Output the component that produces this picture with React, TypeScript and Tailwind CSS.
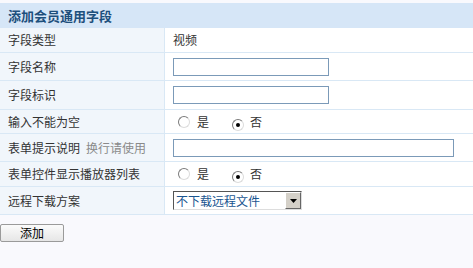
import React from "react";

const font = { fontFamily: '"Noto Sans CJK SC", "Noto Sans", sans-serif' };

function Radio({ checked }: { checked?: boolean }) {
  return (
    <span className="relative inline-flex h-[12px] w-[12px] items-center justify-center rounded-full border border-[#7a7a7a] border-r-[#dcdcdc] border-b-[#dcdcdc] bg-white">
      {checked && <span className="h-[4px] w-[4px] rounded-full bg-black" />}
    </span>
  );
}

function Row({ label, children, h, extra }: { label: string; children?: React.ReactNode; h: string; extra?: string }) {
  return (
    <div className={`flex border-b border-[#d9e8f5] ${h}`}>
      <div className="flex w-[165px] shrink-0 items-center border-r border-[#d9e8f5] bg-[#f1f6fb] pl-[8px] text-[12px] text-[#333]">
        {label}
        {extra && <span className="ml-[6px] text-[#8a8a8a]">{extra}</span>}
      </div>
      <div className="flex flex-1 items-center bg-white pl-[8px] text-[12px] text-[#333]">{children}</div>
    </div>
  );
}

function Input({ w }: { w: string }) {
  return <div className={`h-[18px] ${w} border border-[#7b9ab8] bg-white`} />;
}

function Radios() {
  return (
    <div className="ml-[5px] flex items-center">
      <Radio />
      <span className="ml-[7px]">是</span>
      <span className="ml-[23px]"><Radio checked /></span>
      <span className="ml-[6px]">否</span>
    </div>
  );
}

export default function App() {
  return (
    <div className="h-[268px] w-[473px] bg-[#f9f9fd] pt-[3px]" style={font}>
      <div className="flex h-[25px] items-center bg-[#d6e6f7] pl-[8px] text-[13px] font-bold text-[#1d4f7c]">
        添加会员通用字段
      </div>
      <Row label="字段类型" h="h-[25px]">视频</Row>
      <Row label="字段名称" h="h-[28px]"><Input w="w-[156px]" /></Row>
      <Row label="字段标识" h="h-[29px]"><Input w="w-[156px]" /></Row>
      <Row label="输入不能为空" h="h-[24px]"><Radios /></Row>
      <Row label="表单提示说明" extra="换行请使用" h="h-[28px]"><Input w="w-[281px]" /></Row>
      <Row label="表单控件显示播放器列表" h="h-[25px]"><Radios /></Row>
      <Row label="远程下载方案" h="h-[28px]">
        <div className="flex h-[19px] w-[129px] items-center border border-t-[#555] border-l-[#555] border-b-[#ddd] border-r-[#ddd] bg-white">
          <span className="flex-1 pl-[2px] text-[12px] leading-none text-[#1a5590]">不下载远程文件</span>
          <span className="flex h-[17px] w-[16px] items-center justify-center border border-t-[#fff] border-l-[#fff] border-b-[#666] border-r-[#666] bg-[#d4d0c8]">
            <svg width="7" height="4" viewBox="0 0 7 4"><path d="M0 0h7L3.5 4z" fill="#000" /></svg>
          </span>
        </div>
      </Row>
      <div className="pt-[9px]">
        <button className="flex h-[18px] w-[64px] items-center justify-center rounded-[2px] border border-[#9a9a9a] bg-gradient-to-b from-[#fbfbfb] to-[#e6e6e6] text-[12px] text-black">
          添加
        </button>
      </div>
    </div>
  );
}
